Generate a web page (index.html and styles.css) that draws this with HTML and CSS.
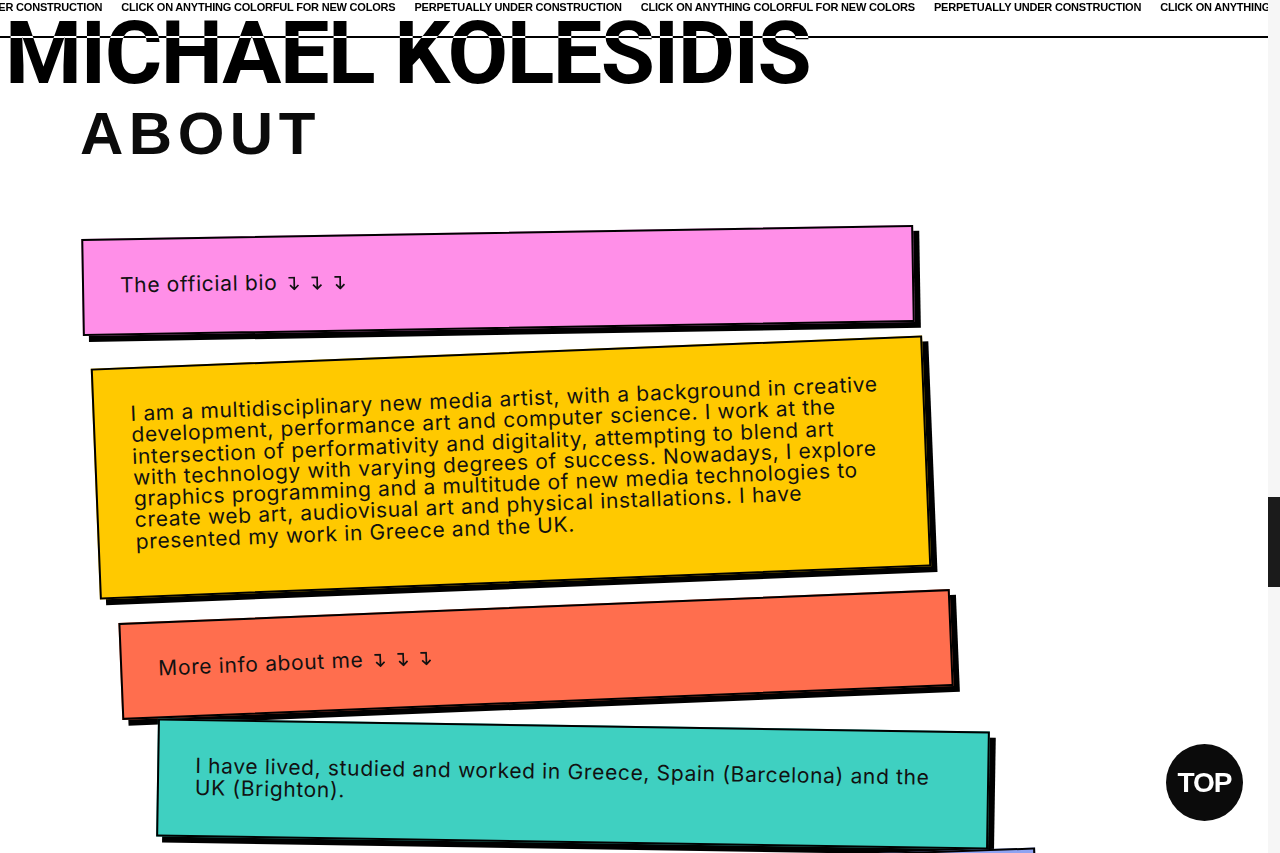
FILE: index.html
```html
<!DOCTYPE html>
<html lang="en">
<head>
<meta charset="utf-8">
<title>Michael Kolesidis — About</title>
<link rel="stylesheet" href="styles.css">
</head>
<body>
<header class="ticker">
  <div class="ticker-track">
    <span class="ticker-item">PERPETUALLY UNDER CONSTRUCTION</span>
    <span class="ticker-item">CLICK ON ANYTHING COLORFUL FOR NEW COLORS</span>
    <span class="ticker-item">PERPETUALLY UNDER CONSTRUCTION</span>
    <span class="ticker-item">CLICK ON ANYTHING COLORFUL FOR NEW COLORS</span>
    <span class="ticker-item">PERPETUALLY UNDER CONSTRUCTION</span>
    <span class="ticker-item">CLICK ON ANYTHING COLORFUL FOR NEW COLORS</span>
  </div>
</header>
<div class="ticker-rule"></div>

<main class="page">
  <h1 class="name">MICHAEL KOLESIDIS</h1>
  <h2 class="section-title">ABOUT</h2>

  <section class="cards">
    <div class="card card--pink card--a">
      <p class="card-text">The official bio<svg class="arrow" viewBox="0 0 11 14"><path d="M0.5 1.2H6.2V12.6M2 8.6L6.2 12.8L10.4 8.6"/></svg><svg class="arrow" viewBox="0 0 11 14"><path d="M0.5 1.2H6.2V12.6M2 8.6L6.2 12.8L10.4 8.6"/></svg><svg class="arrow" viewBox="0 0 11 14"><path d="M0.5 1.2H6.2V12.6M2 8.6L6.2 12.8L10.4 8.6"/></svg></p>
    </div>
    <div class="card card--yellow card--b">
      <p class="card-text card-text--long">I am a multidisciplinary new media artist, with a background in creative<br>development, performance art and computer science. I work at the<br>intersection of performativity and digitality, attempting to blend art<br>with technology with varying degrees of success. Nowadays, I explore<br>graphics programming and a multitude of new media technologies to<br>create web art, audiovisual art and physical installations. I have<br>presented my work in Greece and the UK.</p>
    </div>
    <div class="card card--orange card--c">
      <p class="card-text">More info about me<svg class="arrow" viewBox="0 0 11 14"><path d="M0.5 1.2H6.2V12.6M2 8.6L6.2 12.8L10.4 8.6"/></svg><svg class="arrow" viewBox="0 0 11 14"><path d="M0.5 1.2H6.2V12.6M2 8.6L6.2 12.8L10.4 8.6"/></svg><svg class="arrow" viewBox="0 0 11 14"><path d="M0.5 1.2H6.2V12.6M2 8.6L6.2 12.8L10.4 8.6"/></svg></p>
    </div>
    <div class="card card--teal card--d">
      <p class="card-text">I have lived, studied and worked in Greece, Spain (Barcelona) and the<br>UK (Brighton).</p>
    </div>
    <div class="card card--blue card--e">
      <p class="card-text">I currently live in the UK.</p>
    </div>
  </section>
</main>

<a class="top-button" href="#">TOP</a>

<div class="scrollbar"><div class="scrollbar-thumb"></div></div>
</body>
</html>
```
FILE: styles.css
```css
* { box-sizing: border-box; }

html, body {
  margin: 0;
  padding: 0;
  height: 100%;
  overflow: hidden;
  background: #ffffff;
}

body {
  font-family: "Liberation Sans", Arial, sans-serif;
  color: #0a0a0a;
}

/* ---------- ticker ---------- */
.ticker {
  position: fixed;
  top: 0;
  left: 0;
  right: 12px;
  height: 36px;
  overflow: hidden;
  z-index: 5;
}

.ticker-track {
  display: flex;
  gap: 19px;
  white-space: nowrap;
  transform: translateX(-105px);
}

.ticker-item {
  font-size: 11px;
  line-height: 15px;
  font-weight: 700;
  letter-spacing: -0.2px;
  color: #000;
}

.ticker-rule {
  position: fixed;
  top: 36px;
  left: 0;
  right: 12px;
  height: 2px;
  background: #ffffff;
  mix-blend-mode: difference;
  z-index: 6;
}

/* ---------- page ---------- */
.page {
  padding: 9px 12px 0 0;
}

.name {
  margin: 0 0 0 5px;
  font-family: "Roboto", "Liberation Sans", sans-serif;
  font-size: 88px;
  line-height: 88px;
  font-weight: 700;
  letter-spacing: -1.5px;
  color: #000;
  white-space: nowrap;
}

.section-title {
  margin: 7px 0 0 80px;
  font-size: 60px;
  line-height: 60px;
  font-weight: 700;
  letter-spacing: 5.5px;
  color: #0b0b0b;
}

/* ---------- cards ---------- */
.cards {
  display: flex;
  flex-direction: column;
  align-items: flex-start;
  gap: 23px;
  margin-top: 68px;
}

.card {
  width: 832px;
  border: 2px solid #000;
  box-shadow: 6px 6px 0 #000;
  padding: 34px 36px 37px;
}

.card-text {
  margin: 0;
  font-family: "Inter", "Liberation Sans", sans-serif;
  font-size: 21px;
  line-height: 21.5px;
  letter-spacing: 0.65px;
  color: #111;
  white-space: nowrap;
}

.card-text--long {
  line-height: 21.3px;
  padding-bottom: 7px;
}

.arrow {
  width: 11px;
  height: 14px;
  margin-left: 12px;
  vertical-align: -1px;
  fill: none;
  stroke: #111;
  stroke-width: 1.7;
}

.arrow:first-child { margin-left: 11px; }

.card--pink { background: #ff8fe8; }
.card--yellow { background: #ffc900; }
.card--orange { background: #ff6e4e; }
.card--teal { background: #3fd0c1; }
.card--blue { background: #8fa3f2; }

.card--a { margin-left: 82px; transform: rotate(-0.97deg); }
.card--b { margin-left: 95px; transform: rotate(-2.28deg); }
.card--c { margin-left: 120px; transform: rotate(-2.34deg); }
.card--d { margin-left: 157px; transform: rotate(0.9deg); }
.card--e { margin-left: 205px; margin-top: -4px; transform: rotate(-2deg); }

/* ---------- top button ---------- */
.top-button {
  position: fixed;
  right: 37px;
  bottom: 32px;
  width: 77px;
  height: 77px;
  border-radius: 50%;
  background: #0b0b0b;
  color: #fff;
  display: flex;
  align-items: center;
  justify-content: center;
  font-size: 28px;
  font-weight: 700;
  letter-spacing: -1px;
  text-decoration: none;
  z-index: 7;
}

/* ---------- fake scrollbar ---------- */
.scrollbar {
  position: fixed;
  top: 0;
  right: 0;
  width: 12px;
  height: 100%;
  background: #f6f6f6;
  z-index: 8;
}

.scrollbar-thumb {
  margin-top: 497px;
  height: 90px;
  background: #1b1b1b;
}
```
